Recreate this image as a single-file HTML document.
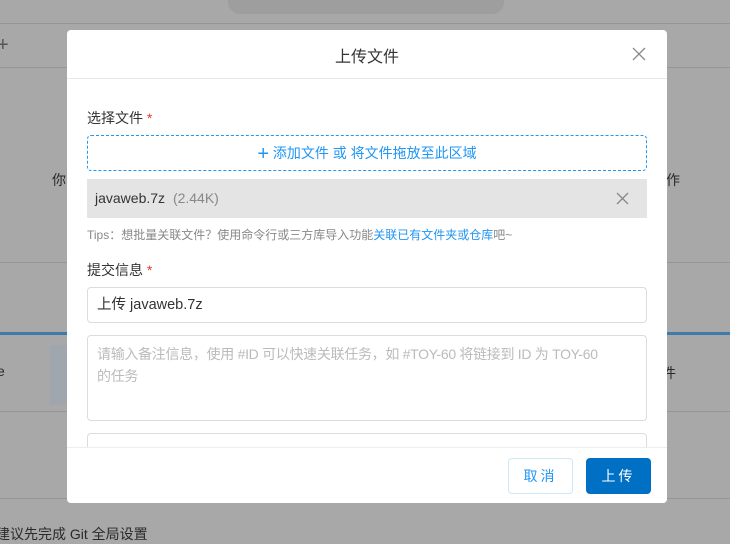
<!DOCTYPE html>
<html><head><meta charset="utf-8"><style>
*{margin:0;padding:0;box-sizing:border-box}
body{width:730px;height:543px;overflow:hidden;background:#a8a8a8;font-family:"Liberation Sans","Noto Sans CJK SC",sans-serif;position:relative;color:#333}
.a{position:absolute}
.hl{position:absolute;left:0;width:730px;height:1px;background:#969696}
.bg{color:#2a2a2a;font-size:14px}
.modal{position:absolute;left:67px;top:30px;width:600px;height:473px;background:#fff;border-radius:4px;overflow:hidden}
.lbl{position:absolute;left:20px;font-size:14px;color:#333}
.lbl b{color:#e53935;font-weight:normal}
.box{position:absolute;left:20px;width:560px;border:1px solid #dcdcdc;border-radius:4px}
</style></head><body>
<div class="a" style="left:228px;top:-10px;width:276px;height:24px;border-radius:12px;background:#9e9e9e"></div>
<div class="hl" style="top:23px"></div>
<div class="hl" style="top:67px"></div>
<div class="hl" style="top:262px"></div>
<div class="a" style="left:0;top:332px;width:730px;height:3px;background:#3f7aa8"></div>
<div class="hl" style="top:411px"></div>
<div class="hl" style="top:498px"></div>
<div class="a bg" style="left:-3px;top:34px;font-size:20px;color:#555">+</div>
<div class="a bg" style="left:52px;top:170px">你</div>
<div class="a bg" style="left:666px;top:170px">作</div>
<div class="a bg" style="left:-3px;top:363px">e</div>
<div class="a bg" style="left:662px;top:363px">件</div>
<div class="a" style="left:50px;top:345px;width:20px;height:60px;background:#9fa6ad"></div>
<div class="a bg" style="left:-4px;top:524px">建议先完成 Git 全局设置</div>

<div class="modal">
<div class="a" style="left:0;top:13px;width:600px;text-align:center;font-size:16px;color:#333">上传文件</div>
<svg class="a" style="left:565px;top:17px" width="14" height="14" viewBox="0 0 14 14"><path d="M1 1L13 13M13 1L1 13" stroke="#888" stroke-width="1.3"/></svg>
<div class="a" style="left:0;top:48px;width:600px;height:1px;background:#e8e8e8"></div>
<div class="lbl" style="top:78px">选择文件 <b>*</b></div>
<div class="a" style="left:20px;top:105px;width:560px;height:36px;border:1px dashed #2196f3;border-radius:4px;color:#2196f3;font-size:14px;text-align:center;line-height:34px"><span style="font-size:20px;vertical-align:-2px">+</span> 添加文件 或 将文件拖放至此区域</div>
<div class="a" style="left:20px;top:149px;width:560px;height:39px;background:#e4e4e4;font-size:14px;line-height:39px;padding-left:8px;color:#333">javaweb.7z <span style="color:#888;margin-left:4px">(2.44K)</span>
<svg class="a" style="left:529px;top:13px" width="13" height="13" viewBox="0 0 13 13"><path d="M1 1L12 12M12 1L1 12" stroke="#888" stroke-width="1.3"/></svg></div>
<div class="a" style="left:20px;top:196px;font-size:12px;color:#888">Tips：想批量关联文件？使用命令行或三方库导入功能<span style="color:#2196f3">关联已有文件夹或仓库</span>吧~</div>
<div class="lbl" style="top:230px">提交信息 <b>*</b></div>
<div class="box" style="top:257px;height:36px;font-size:14.5px;line-height:34px;padding-left:9px;color:#333">上传 javaweb.7z</div>
<div class="box" style="top:305px;height:86px;font-size:14px;line-height:22px;padding:7px 9px;color:#bbb;letter-spacing:-0.3px">请输入备注信息，使用 #ID 可以快速关联任务，如 #TOY-60 将链接到 ID 为 TOY-60<br>的任务</div>
<div class="box" style="top:403px;height:40px"></div>
<div class="a" style="left:0;top:417px;width:600px;height:56px;background:#fff;border-top:1px solid #eee"></div>
<div class="a" style="left:441px;top:428px;width:65px;height:36px;border:1px solid #cfe8f8;border-radius:4px;color:#2196f3;font-size:14px;text-align:center;line-height:34px;letter-spacing:3px">取消</div>
<div class="a" style="left:519px;top:428px;width:65px;height:36px;background:#0070c4;border-radius:4px;color:#fff;font-size:14px;text-align:center;line-height:36px;letter-spacing:3px">上传</div>
</div>
</body></html>
